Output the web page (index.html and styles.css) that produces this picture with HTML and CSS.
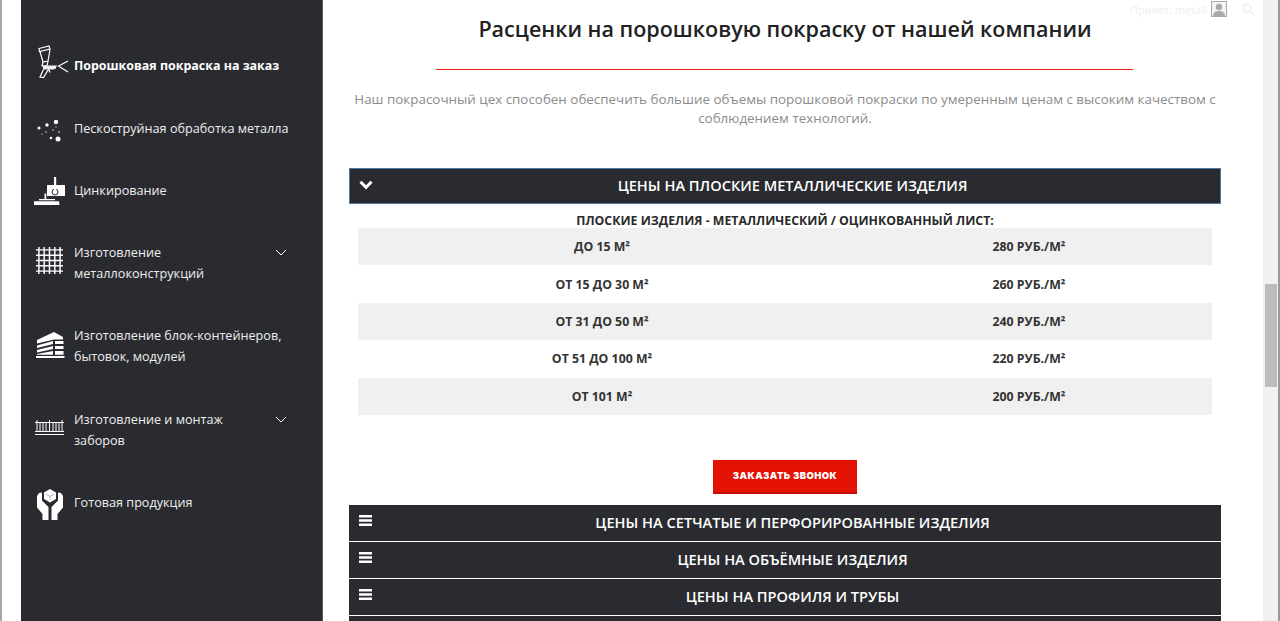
FILE: index.html
```html
<!DOCTYPE html>
<html lang="ru">
<head>
    <meta charset="UTF-8">
    <title>Расценки на порошковую покраску</title>
    <link rel="stylesheet" href="styles.css">
</head>
<body>
    <div class="page">
        <aside class="sidebar">
            <ul class="menu">
                <li class="menu-item item-paint active">
                    <svg class="icon" viewBox="0 0 40 40" fill="none" stroke="#fff" stroke-width="1.200">
                        <path d="M9 6.500L19 4l1 3-10.500 2.500zM10 9.500l3 10.500 5-1 2-11.500"/>
                        <path d="M13 20l-1 4h5l1-5"/>
                        <path d="M13 24h14M13 27h11"/>
                        <path d="M13.500 27.500L10 35l3.500 0.500L18 28M18.500 27l1.500 3.500M38 19l-9.500 5 9.500 6" />
                        <path d="M13 25.500h13" stroke-width="2.500"/>
                    </svg>
                    <span class="menu-text">Порошковая покраска на заказ</span>
                </li>
                <li class="menu-item item-sand">
                    <svg class="icon" viewBox="0 0 40 40" fill="#fff">
                        <circle cx="9" cy="20" r="1.500"/><circle cx="17" cy="17" r="1.700"/><circle cx="26" cy="14" r="2.200"/>
                        <circle cx="21" cy="30" r="1.300"/><circle cx="28" cy="31" r="2.500"/><circle cx="23" cy="22" r="0.700"/>
                        <circle cx="29" cy="24" r="0.800"/><circle cx="12" cy="26" r="0.600"/><circle cx="16" cy="24" r="0.700"/>
                        <circle cx="26" cy="19" r="0.600"/>
                    </svg>
                    <span class="menu-text">Пескоструйная обработка металла</span>
                </li>
                <li class="menu-item item-zinc">
                    <svg class="icon" viewBox="0 0 40 40" fill="#fff">
                        <path d="M17 13h18v11H17z"/>
                        <circle cx="25" cy="20" r="3" fill="none" stroke="#2a2b30" stroke-width="1"/>
                        <path d="M24 5h2.200v15H24z"/>
                        <path d="M14.500 21.500h1.800V27h-1.800zM9 27h16v1.300H9zM4 29.300h25l0.500 3.700H4z"/>
                    </svg>
                    <span class="menu-text">Цинкирование</span>
                </li>
                <li class="menu-item item-frame">
                    <svg class="icon" viewBox="0 0 28 28" fill="none" stroke="#fff" stroke-width="1.500">
                        <path d="M0 3h28M0 8.500h28M0 14h28M0 19.500h28M0 25h28M3 0v28M8.500 0v28M14 0v28M19.500 0v28M25 0v28"/>
                    </svg>
                    <span class="menu-text">Изготовление<br>металлоконструкций</span>
                    <svg class="caret" viewBox="0 0 12 7" fill="none" stroke="#fff" stroke-width="1"><path d="M1 1l5 5 5-5"/></svg>
                </li>
                <li class="menu-item item-block">
                    <svg class="icon" viewBox="0 0 40 40" fill="#fff">
                        <path d="M7 15L24 7l9 5v2.500H24L7 18.500z"/>
                        <path d="M7 20.500l16-4.500v3L7 23zM7 25l16-4v3L7 27.500zM7 29l16-3v3.800H7z"/>
                        <path d="M25 16h8.500v3H25zM25 21h8.500v3H25zM25 26h8.500v3.800H25z"/>
                        <path d="M6 31h28.500v2H6z"/>
                    </svg>
                    <span class="menu-text">Изготовление блок-контейнеров,<br>бытовок, модулей</span>
                </li>
                <li class="menu-item item-fence">
                    <svg class="icon" viewBox="0 0 29 16" fill="none" stroke="#fff" stroke-width="1">
                        <path d="M0 3.500h29M0 12.500h29M0 15.500h29M2 1v12M5 3v9M8 3v9M11 3v9M14.500 1v12M18 3v9M21 3v9M24 3v9M27 1v12"/>
                    </svg>
                    <span class="menu-text">Изготовление и монтаж<br>заборов</span>
                    <svg class="caret" viewBox="0 0 12 7" fill="none" stroke="#fff" stroke-width="1"><path d="M1 1l5 5 5-5"/></svg>
                </li>
                <li class="menu-item item-ready">
                    <svg class="icon" viewBox="0 0 40 40" fill="#fff">
                        <path d="M20 4l6 3.500v6.500l-6 3.500-6-3.500V7.500z"/>
                        <path d="M16 9l4 2.500L24 9M20 11.500v3" fill="none" stroke="#8a8a8a" stroke-width="0.700"/>
                        <path d="M9 8l3-0.500v8L18.500 22v13H12.500v-6L7 22.500V11z"/>
                        <path d="M31 8l-3-0.500v8L21.500 22v13H27.500v-6L33 22.500V11z"/>
                    </svg>
                    <span class="menu-text">Готовая продукция</span>
                </li>
            </ul>
        </aside>

        <main class="content">
            <div class="user-bar">
                <span>Привет, metall</span>
                <svg class="avatar" viewBox="0 0 16 16"><rect width="16" height="16" fill="#a9a9a9"/><rect x="1" y="1" width="14" height="14" fill="#f4f4f4"/><circle cx="8" cy="6" r="3.200" fill="#a9a9a9"/><path d="M2 15c0-4 3-5 6-5s6 1 6 5z" fill="#a9a9a9"/></svg>
                <svg class="search" viewBox="0 0 14 14" fill="none" stroke="#eee" stroke-width="1.600"><circle cx="5.500" cy="5.500" r="4.200"/><path d="M8.500 8.500l4.500 4.500"/></svg>
            </div>
            <h1>Расценки на порошковую покраску от нашей компании</h1>
            <div class="divider"></div>
            <p class="lead">Наш покрасочный цех способен обеспечить большие объемы порошковой покраски по умеренным ценам с высоким качеством с соблюдением технологий.</p>

            <div class="accordion">
                <div class="acc-head open">
                    <svg class="acc-icon chevron" viewBox="0 0 14 10" fill="none" stroke="#fff" stroke-width="3"><path d="M1.500 1.800L7 7.300l5.500-5.500"/></svg>
                    ЦЕНЫ НА ПЛОСКИЕ МЕТАЛЛИЧЕСКИЕ ИЗДЕЛИЯ
                </div>
                <div class="acc-body">
                    <div class="table-title">ПЛОСКИЕ ИЗДЕЛИЯ - МЕТАЛЛИЧЕСКИЙ / ОЦИНКОВАННЫЙ ЛИСТ:</div>
                    <table class="prices">
                        <tr><td>ДО 15 М²</td><td>280 РУБ./М²</td></tr>
                        <tr><td>ОТ 15 ДО 30 М²</td><td>260 РУБ./М²</td></tr>
                        <tr><td>ОТ 31 ДО 50 М²</td><td>240 РУБ./М²</td></tr>
                        <tr><td>ОТ 51 ДО 100 М²</td><td>220 РУБ./М²</td></tr>
                        <tr><td>ОТ 101 М²</td><td>200 РУБ./М²</td></tr>
                    </table>
                    <button class="call-btn" type="button">ЗАКАЗАТЬ ЗВОНОК</button>
                </div>
                <div class="acc-head">
                    <svg class="acc-icon bars" viewBox="0 0 13 11" fill="#fff"><path d="M0 0h13v2.400H0zM0 4.300h13v2.400H0zM0 8.600h13V11H0z"/></svg>
                    ЦЕНЫ НА СЕТЧАТЫЕ И ПЕРФОРИРОВАННЫЕ ИЗДЕЛИЯ
                </div>
                <div class="acc-head">
                    <svg class="acc-icon bars" viewBox="0 0 13 11" fill="#fff"><path d="M0 0h13v2.400H0zM0 4.300h13v2.400H0zM0 8.600h13V11H0z"/></svg>
                    ЦЕНЫ НА ОБЪЁМНЫЕ ИЗДЕЛИЯ
                </div>
                <div class="acc-head">
                    <svg class="acc-icon bars" viewBox="0 0 13 11" fill="#fff"><path d="M0 0h13v2.400H0zM0 4.300h13v2.400H0zM0 8.600h13V11H0z"/></svg>
                    ЦЕНЫ НА ПРОФИЛЯ И ТРУБЫ
                </div>
                <div class="acc-head"></div>
            </div>
        </main>

        <div class="scrollbar"><div class="thumb"></div></div>
    </div>
</body>
</html>
```

FILE: styles.css
```css
* {
    box-sizing: border-box;
}
html, body {
    margin: 0;
    height: 100%;
    overflow: hidden;
}
body {
    font-family: "Open Sans", "Noto Sans", sans-serif;
    background: #fff;
    color: #222;
}
.page {
    display: flex;
    height: 621px;
    padding-left: 21px;
    border-right: 2px solid #9a9a9a;
    box-shadow: inset 2px 0 0 #a8a8a8;
}
.sidebar {
    width: 302px;
    flex: none;
    background: #2a2b30;
    border-right: 1px solid #55565a;
    padding-top: 45px;
}
.menu {
    list-style: none;
    margin: 0;
    padding: 0 0 0 12px;
}
.menu-item {
    display: flex;
    align-items: center;
    color: #eee;
    font-size: 12.650px;
    line-height: 21px;
    position: relative;
}
.menu-item.active {
    color: #fff;
    font-size: 12.450px;
    font-weight: 700;
}
.menu-text {
    margin-left: 41px;
}
.icon {
    position: absolute;
    left: -3px;
    top: 0;
    width: 40px;
    height: 40px;
}
.caret {
    position: absolute;
    left: 242px;
    top: 7px;
    width: 12px;
    height: 7px;
}
.item-paint {
    height: 40px;
    margin-bottom: 23px;
}
.item-paint .icon {
    top: -3px;
}
.item-sand {
    height: 40px;
    margin-bottom: 22px;
}
.item-zinc {
    height: 40px;
    margin-bottom: 32px;
}
.item-zinc .icon {
    top: 2px;
}
.item-frame {
    height: 42px;
    margin-bottom: 41px;
}
.item-frame .icon {
    left: 3px;
    top: 5px;
    width: 27px;
    height: 27px;
}
.item-block {
    height: 42px;
    margin-bottom: 42px;
}
.item-fence {
    height: 42px;
    margin-bottom: 31px;
}
.item-fence .icon {
    left: 2px;
    top: 10px;
    width: 29px;
    height: 16px;
}
.item-ready {
    height: 40px;
}
.item-ready .icon {
    top: 3px;
}
.content {
    flex: 1;
    min-width: 0;
    padding: 0 42px 0 26px;
    position: relative;
}
.user-bar {
    position: absolute;
    top: 0;
    right: 8px;
    height: 18px;
    display: flex;
    align-items: center;
    gap: 4px;
    color: #eeeeee;
    font-size: 11px;
}
.avatar {
    width: 16px;
    height: 16px;
}
.search {
    width: 13px;
    height: 13px;
    margin-left: 11px;
}
h1 {
    margin: 0;
    padding-top: 14px;
    font-size: 21.500px;
    line-height: 30px;
    font-weight: 600;
    text-align: center;
    color: #222;
}
.divider {
    width: 697px;
    height: 1px;
    background: #ee1c14;
    margin: 25px auto 0 87px;
}
.lead {
    margin: 20px 0 0;
    font-size: 13.400px;
    line-height: 19px;
    color: #8c8c8c;
    text-align: center;
}
.accordion {
    margin-top: 40px;
}
.acc-head {
    height: 36px;
    margin-bottom: 1px;
    padding-left: 15px;
    background: #2a2b30;
    color: #fff;
    font-size: 14.600px;
    font-weight: 600;
    line-height: 35px;
    text-align: center;
    position: relative;
}
.acc-head.open {
    border: 1px solid #4d78a8;
    line-height: 33px;
    margin-bottom: 0;
}
.acc-icon {
    position: absolute;
    left: 9px;
}
.chevron {
    top: 10.500px;
    width: 14px;
    height: 10px;
}
.bars {
    left: 10px;
    top: 10px;
    width: 13px;
    height: 11px;
}
.acc-body {
    padding: 9px 9px 11px;
    text-align: center;
}
.table-title {
    font-size: 12.300px;
    font-weight: 700;
    line-height: 15px;
    color: #2a2a2a;
}
.prices {
    width: 100%;
    table-layout: fixed;
    border-collapse: collapse;
    font-size: 12.300px;
    font-weight: 700;
    color: #333;
}
.prices td {
    height: 37.400px;
    padding: 0;
    text-align: center;
}
.prices td:first-child {
    width: 488px;
}
.prices tr:nth-child(odd) {
    background: #f0f0f0;
}
.call-btn {
    display: block;
    width: 144px;
    height: 34px;
    margin: 45px auto 0;
    background: #e31205;
    color: #fff;
    border: none;
    border-bottom: 2px solid #c50f05;
    font-family: "Inter", sans-serif;
    font-size: 9.500px;
    font-weight: 900;
    letter-spacing: 0.400px;
    padding: 0;
}
.scrollbar {
    width: 15px;
    flex: none;
    background: #f1f1f1;
    padding: 14px 1px 0 2px;
}
.thumb {
    height: 103px;
    margin-top: 270px;
    background: #bcbcbc;
}
```
